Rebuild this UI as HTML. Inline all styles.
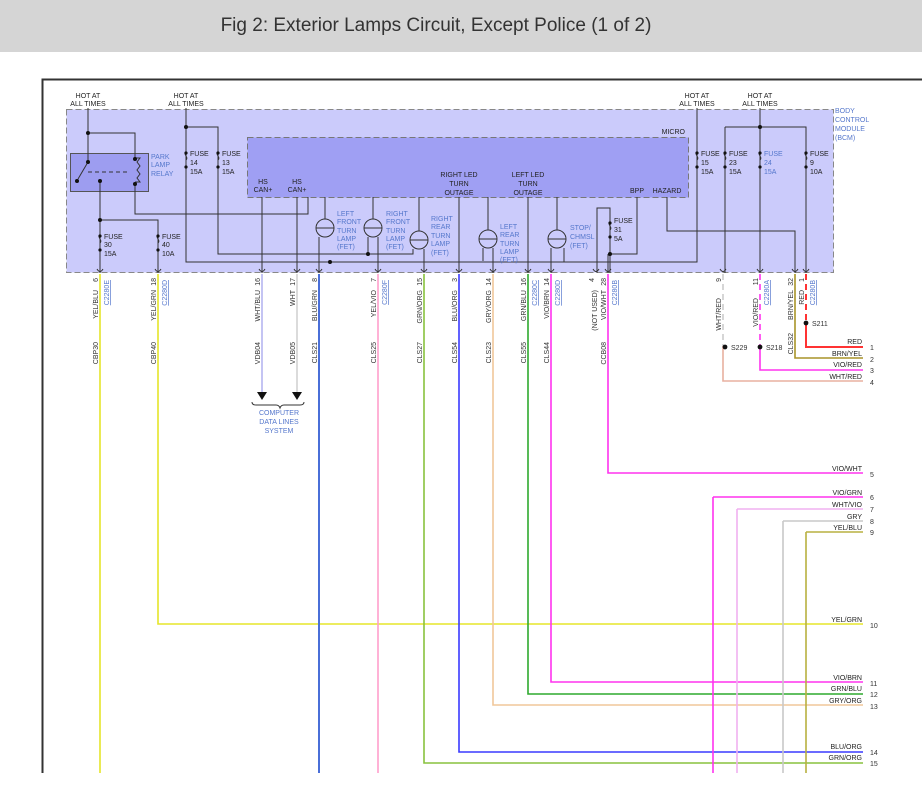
<!DOCTYPE html>
<html><head><meta charset="utf-8"><style>
html,body{margin:0;padding:0;background:#fff;width:922px;height:807px;overflow:hidden}
svg{display:block}
text{font-family:"Liberation Sans",sans-serif}
.t{font-size:7px;fill:#222}
.b{font-size:7px;fill:#5577cc}
.c{font-size:7px;fill:#5577cc;text-decoration:underline}
.n{font-size:7px;fill:#333}
.k{stroke:#333;stroke-width:1;fill:none}
</style></head><body>
<svg width="922" height="807" viewBox="0 0 922 807">
<rect x="0" y="0" width="922" height="52" fill="#d5d5d5"/>
<text x="436" y="31" text-anchor="middle" style="font-size:19px;fill:#333">Fig 2: Exterior Lamps Circuit, Except Police (1 of 2)</text>
<path d="M42.5 773V79.5H922" stroke="#333" stroke-width="2" fill="none"/>
<!-- BCM -->
<rect x="66.5" y="109.5" width="767" height="163" fill="#cbcbfb" stroke="#888" stroke-dasharray="6,3"/>
<rect x="247.5" y="137.5" width="441" height="60" fill="#9f9ff3" stroke="#777" stroke-dasharray="6,3"/>
<text class="t" x="685" y="134" text-anchor="end">MICRO</text>
<text class="b" x="835" y="113">BODY</text><text class="b" x="835" y="122">CONTROL</text><text class="b" x="835" y="131">MODULE</text><text class="b" x="835" y="140">(BCM)</text>
<g class="t" text-anchor="middle">
<text x="88" y="98">HOT AT</text><text x="88" y="106">ALL TIMES</text>
<text x="186" y="98">HOT AT</text><text x="186" y="106">ALL TIMES</text>
<text x="697" y="98">HOT AT</text><text x="697" y="106">ALL TIMES</text>
<text x="760" y="98">HOT AT</text><text x="760" y="106">ALL TIMES</text>
</g>
<rect x="70.5" y="153.5" width="78" height="38" fill="#9d9df0" stroke="#555"/>
<g class="k">
<path d="M88 108V162M88 133H135V158"/>
<path d="M88 162L78 179"/>
<path d="M88 172H130" stroke-dasharray="4,3"/>
<path d="M135 158H140l-3 4 3 4-3 4 3 4-3 4 3 4H135"/>
<path d="M135 185V214H308V197"/>
<path d="M100 181V273M100 220H158V273"/>
<path d="M186 108V262H697V108"/>
<path d="M186 127H218V254H413V249"/>
<path d="M262 197V273M297 197V273"/>
<path d="M760 108V273M725 127H806V273M725 127V273"/>
<path d="M459 197V273M528 197V273"/>
<path d="M667 197V231H795V273"/>
<path d="M637 197V254H610V273M597 273V208H610V254"/>
<path d="M325 197V219M373 197V219M419 197V231M488 197V230M557 197V230"/>
<path d="M319 237V273M378 237V273M424 249V273M493 248V273M551 248V273M608 254V273"/>
<path d="M564 248V262"/>
<path d="M483 248V261M368 237V254"/>
<circle cx="325" cy="228" r="9"/><circle cx="373" cy="228" r="9"/><circle cx="419" cy="240" r="9"/><circle cx="488" cy="239" r="9"/><circle cx="557" cy="239" r="9"/>
<path d="M316 228H334M364 228H382M410 240H428M479 239H497M548 239H566"/>
</g>
<g class="k">
<path d="M100 235c-3 3 3 5 0 8M158 235c-3 3 3 5 0 8M186 152c-3 3 3 5 0 8M218 152c-3 3 3 5 0 8M610 222c-3 3 3 5 0 8M697 152c-3 3 3 5 0 8M725 152c-3 3 3 5 0 8M760 152c-3 3 3 5 0 8M806 152c-3 3 3 5 0 8"/>
</g>
<g fill="#111">
<circle cx="88" cy="133" r="2"/><circle cx="88" cy="162" r="2"/><circle cx="77" cy="181" r="2"/><circle cx="100" cy="181" r="2"/><circle cx="135" cy="159" r="2"/><circle cx="135" cy="184" r="2"/><circle cx="100" cy="220" r="2"/><circle cx="186" cy="127" r="2"/><circle cx="330" cy="262" r="2"/><circle cx="368" cy="254" r="2"/><circle cx="760" cy="127" r="2"/><circle cx="610" cy="254" r="2"/>
<circle cx="100" cy="236" r="1.6"/><circle cx="100" cy="250" r="1.6"/><circle cx="158" cy="236" r="1.6"/><circle cx="158" cy="250" r="1.6"/>
<circle cx="186" cy="153" r="1.6"/><circle cx="186" cy="167" r="1.6"/><circle cx="218" cy="153" r="1.6"/><circle cx="218" cy="167" r="1.6"/>
<circle cx="610" cy="223" r="1.6"/><circle cx="610" cy="237" r="1.6"/>
<circle cx="697" cy="153" r="1.6"/><circle cx="697" cy="167" r="1.6"/><circle cx="725" cy="153" r="1.6"/><circle cx="725" cy="167" r="1.6"/><circle cx="760" cy="153" r="1.6"/><circle cx="760" cy="167" r="1.6"/><circle cx="806" cy="153" r="1.6"/><circle cx="806" cy="167" r="1.6"/>
</g>
<g class="t">
<text x="104" y="239">FUSE</text><text x="104" y="247">30</text><text x="104" y="256">15A</text>
<text x="162" y="239">FUSE</text><text x="162" y="247">40</text><text x="162" y="256">10A</text>
<text x="190" y="156">FUSE</text><text x="190" y="165">14</text><text x="190" y="174">15A</text>
<text x="222" y="156">FUSE</text><text x="222" y="165">13</text><text x="222" y="174">15A</text>
<text x="614" y="223">FUSE</text><text x="614" y="232">31</text><text x="614" y="241">5A</text>
<text x="701" y="156">FUSE</text><text x="701" y="165">15</text><text x="701" y="174">15A</text>
<text x="729" y="156">FUSE</text><text x="729" y="165">23</text><text x="729" y="174">15A</text>
<text x="810" y="156">FUSE</text><text x="810" y="165">9</text><text x="810" y="174">10A</text>
</g>
<g class="b"><text x="764" y="156">FUSE</text><text x="764" y="165">24</text><text x="764" y="174">15A</text></g>
<g class="t" text-anchor="middle">
<text x="263" y="184">HS</text><text x="263" y="192">CAN+</text>
<text x="297" y="184">HS</text><text x="297" y="192">CAN+</text>
<text x="459" y="177">RIGHT LED</text><text x="459" y="186">TURN</text><text x="459" y="195">OUTAGE</text>
<text x="528" y="177">LEFT LED</text><text x="528" y="186">TURN</text><text x="528" y="195">OUTAGE</text>
<text x="637" y="193">BPP</text><text x="667" y="193">HAZARD</text>
</g>
<g class="b">
<text x="151" y="159">PARK</text><text x="151" y="167">LAMP</text><text x="151" y="176">RELAY</text>
<text x="337" y="216">LEFT</text><text x="337" y="224">FRONT</text><text x="337" y="233">TURN</text><text x="337" y="241">LAMP</text><text x="337" y="249">(FET)</text>
<text x="386" y="216">RIGHT</text><text x="386" y="224">FRONT</text><text x="386" y="233">TURN</text><text x="386" y="241">LAMP</text><text x="386" y="249">(FET)</text>
<text x="431" y="221">RIGHT</text><text x="431" y="229">REAR</text><text x="431" y="238">TURN</text><text x="431" y="246">LAMP</text><text x="431" y="255">(FET)</text>
<text x="500" y="229">LEFT</text><text x="500" y="237">REAR</text><text x="500" y="246">TURN</text><text x="500" y="254">LAMP</text><text x="500" y="262">(FET)</text>
<text x="570" y="230">STOP/</text><text x="570" y="239">CHMSL</text><text x="570" y="248">(FET)</text>
</g>
<g class="k" stroke="#666">
<path d="M97 269q3 5 6 0M155 269q3 5 6 0M259 269q3 5 6 0M294 269q3 5 6 0M316 269q3 5 6 0M375 269q3 5 6 0M421 269q3 5 6 0M456 269q3 5 6 0M490 269q3 5 6 0M525 269q3 5 6 0M548 269q3 5 6 0M593 269q3 5 6 0M605 269q3 5 6 0M720 269q3 5 6 0M757 269q3 5 6 0M792 269q3 5 6 0M803 269q3 5 6 0"/>
</g>
<g fill="none" stroke-width="1.6">
<path d="M100 274V773" stroke="#e5e52a"/>
<path d="M158 274V624H863" stroke="#e5e52a"/>
<path d="M262 274V392" stroke="#b5b5f0"/>
<path d="M297 274V392" stroke="#d2d2d2"/>
<path d="M319 274V773" stroke="#4a6fd8" stroke-width="2"/>
<path d="M378 274V773" stroke="#ff9fcc"/>
<path d="M424 274V763H863" stroke="#88c23e"/>
<path d="M459 274V752H863" stroke="#3a3aff"/>
<path d="M493 274V705H863" stroke="#f0c79a"/>
<path d="M528 274V694H863" stroke="#2eaa2e"/>
<path d="M551 274V682H863" stroke="#ff33ee"/>
<path d="M608 274V473H863" stroke="#ff33ee"/>
<path d="M723 274V346" stroke="#ccc" stroke-dasharray="6,4"/>
<path d="M723 346V381H863" stroke="#e8b0a0"/>
<path d="M760 274V346" stroke="#ff33ee" stroke-dasharray="6,4"/>
<path d="M760 346V370H863" stroke="#ff33ee"/>
<path d="M795 274V358H863" stroke="#a89428"/>
<path d="M806 274V323" stroke="#ff3333" stroke-width="2" stroke-dasharray="6,4"/>
<path d="M806 323V347H863" stroke="#ff3333" stroke-width="2"/>
<path d="M713 497H863M713 497V773" stroke="#ff33ee"/>
<path d="M737 509H863M737 509V773" stroke="#f0b0f0"/>
<path d="M783 521H863M783 521V773" stroke="#c8c8c8"/>
<path d="M806 532H863M806 532V773" stroke="#b8b040"/>
</g>
<g fill="#111"><circle cx="725" cy="347" r="2.4"/><circle cx="760" cy="347" r="2.4"/><circle cx="806" cy="323" r="2.4"/>
<path d="M257 392h10l-5 8z"/><path d="M292 392h10l-5 8z"/></g>
<path d="M252 402q0 3 4 3H276q3 0 4 3q1-3 4-3H300q4 0 4-3" class="k" stroke="#777"/>
<g class="b" text-anchor="middle"><text x="279" y="415">COMPUTER</text><text x="279" y="424">DATA LINES</text><text x="279" y="433">SYSTEM</text></g>
<g class="n"><text x="731" y="350">S229</text><text x="766" y="350">S218</text><text x="812" y="326">S211</text></g>
<g class="t" text-anchor="end">
<text x="862" y="344">RED</text><text x="862" y="356">BRN/YEL</text><text x="862" y="367">VIO/RED</text><text x="862" y="379">WHT/RED</text>
<text x="862" y="471">VIO/WHT</text><text x="862" y="495">VIO/GRN</text><text x="862" y="507">WHT/VIO</text><text x="862" y="519">GRY</text><text x="862" y="530">YEL/BLU</text>
<text x="862" y="622">YEL/GRN</text><text x="862" y="680">VIO/BRN</text><text x="862" y="691">GRN/BLU</text><text x="862" y="703">GRY/ORG</text><text x="862" y="749">BLU/ORG</text><text x="862" y="760">GRN/ORG</text>
</g>
<g class="n">
<text x="870" y="350">1</text><text x="870" y="362">2</text><text x="870" y="373">3</text><text x="870" y="385">4</text><text x="870" y="477">5</text><text x="870" y="500">6</text><text x="870" y="512">7</text><text x="870" y="524">8</text><text x="870" y="535">9</text><text x="870" y="628">10</text><text x="870" y="686">11</text><text x="870" y="697">12</text><text x="870" y="709">13</text><text x="870" y="755">14</text><text x="870" y="766">15</text>
</g>
<g class="n" text-anchor="end">
<text transform="rotate(-90 98 278)" x="98" y="278">6</text>
<text transform="rotate(-90 156 278)" x="156" y="278">18</text>
<text transform="rotate(-90 260 278)" x="260" y="278">16</text>
<text transform="rotate(-90 295 278)" x="295" y="278">17</text>
<text transform="rotate(-90 317 278)" x="317" y="278">8</text>
<text transform="rotate(-90 376 278)" x="376" y="278">7</text>
<text transform="rotate(-90 422 278)" x="422" y="278">15</text>
<text transform="rotate(-90 457 278)" x="457" y="278">3</text>
<text transform="rotate(-90 491 278)" x="491" y="278">14</text>
<text transform="rotate(-90 526 278)" x="526" y="278">16</text>
<text transform="rotate(-90 549 278)" x="549" y="278">14</text>
<text transform="rotate(-90 594 278)" x="594" y="278">4</text>
<text transform="rotate(-90 606 278)" x="606" y="278">28</text>
<text transform="rotate(-90 721 278)" x="721" y="278">9</text>
<text transform="rotate(-90 758 278)" x="758" y="278">11</text>
<text transform="rotate(-90 793 278)" x="793" y="278">32</text>
<text transform="rotate(-90 804 278)" x="804" y="278">1</text>
<text transform="rotate(-90 98 290)" x="98" y="290">YEL/BLU</text>
<text transform="rotate(-90 156 290)" x="156" y="290">YEL/GRN</text>
<text transform="rotate(-90 260 290)" x="260" y="290">WHT/BLU</text>
<text transform="rotate(-90 295 290)" x="295" y="290">WHT</text>
<text transform="rotate(-90 317 290)" x="317" y="290">BLU/GRN</text>
<text transform="rotate(-90 376 290)" x="376" y="290">YEL/VIO</text>
<text transform="rotate(-90 422 290)" x="422" y="290">GRN/ORG</text>
<text transform="rotate(-90 457 290)" x="457" y="290">BLU/ORG</text>
<text transform="rotate(-90 491 290)" x="491" y="290">GRY/ORG</text>
<text transform="rotate(-90 526 290)" x="526" y="290">GRN/BLU</text>
<text transform="rotate(-90 549 290)" x="549" y="290">VIO/BRN</text>
<text transform="rotate(-90 597 290)" x="597" y="290">(NOT USED)</text>
<text transform="rotate(-90 606 290)" x="606" y="290">VIO/WHT</text>
<text transform="rotate(-90 721 298)" x="721" y="298">WHT/RED</text>
<text transform="rotate(-90 758 298)" x="758" y="298">VIO/RED</text>
<text transform="rotate(-90 793 290)" x="793" y="290">BRN/YEL</text>
<text transform="rotate(-90 804 290)" x="804" y="290">RED</text>
<text transform="rotate(-90 98 342)" x="98" y="342">CBP30</text>
<text transform="rotate(-90 156 342)" x="156" y="342">CBP40</text>
<text transform="rotate(-90 260 342)" x="260" y="342">VDB04</text>
<text transform="rotate(-90 295 342)" x="295" y="342">VDB05</text>
<text transform="rotate(-90 317 342)" x="317" y="342">CLS21</text>
<text transform="rotate(-90 376 342)" x="376" y="342">CLS25</text>
<text transform="rotate(-90 422 342)" x="422" y="342">CLS27</text>
<text transform="rotate(-90 457 342)" x="457" y="342">CLS54</text>
<text transform="rotate(-90 491 342)" x="491" y="342">CLS23</text>
<text transform="rotate(-90 526 342)" x="526" y="342">CLS55</text>
<text transform="rotate(-90 549 342)" x="549" y="342">CLS44</text>
<text transform="rotate(-90 606 342)" x="606" y="342">CCB08</text>
<text transform="rotate(-90 793 333)" x="793" y="333">CLS32</text>
</g>
<g class="c" text-anchor="end">
<text transform="rotate(-90 109 280)" x="109" y="280">C2280E</text>
<text transform="rotate(-90 167 280)" x="167" y="280">C2280D</text>
<text transform="rotate(-90 387 280)" x="387" y="280">C2280F</text>
<text transform="rotate(-90 537 280)" x="537" y="280">C2280C</text>
<text transform="rotate(-90 560 280)" x="560" y="280">C2280D</text>
<text transform="rotate(-90 617 280)" x="617" y="280">C2280B</text>
<text transform="rotate(-90 769 280)" x="769" y="280">C2280A</text>
<text transform="rotate(-90 815 280)" x="815" y="280">C2280B</text>
</g>
</svg>
</body></html>
